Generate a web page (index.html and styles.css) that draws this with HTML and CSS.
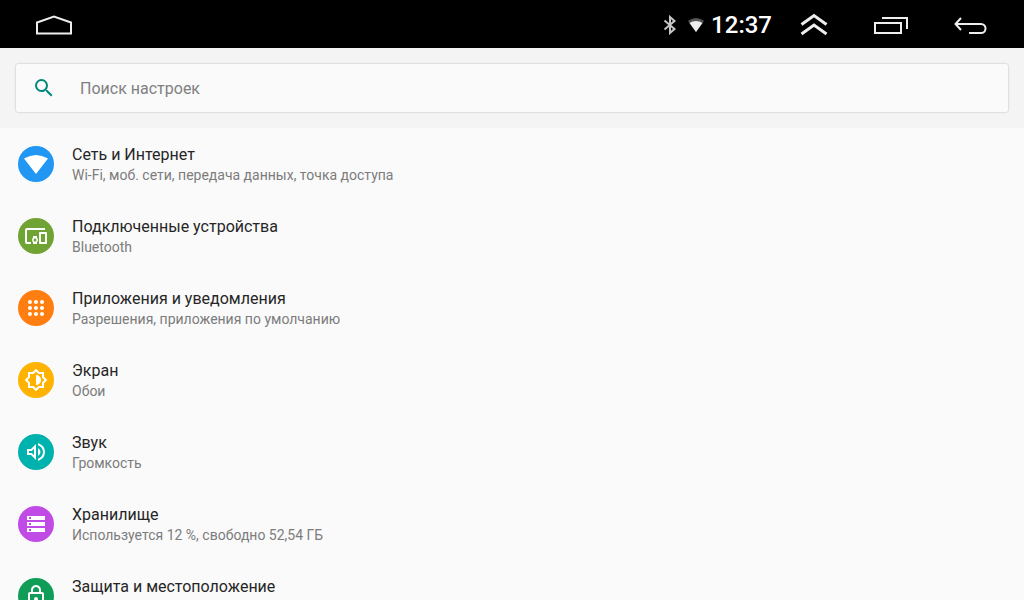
FILE: index.html
```
<!DOCTYPE html>
<html lang="ru">
<head>
  <meta charset="UTF-8">
  <meta name="viewport" content="width=device-width, initial-scale=1.0">
  <title>Настройки</title>
  <link rel="stylesheet" href="styles.css">
</head>
<body>

  <header class="status-bar">
    <button class="nav-button home" aria-label="Домой">
      <svg width="36" height="20" viewBox="0 0 36 20"><path d="M1 18.500V7.500L18 1.500L35 7.500V18.500Z"/></svg>
    </button>

    <div class="status">
      <svg class="bluetooth" width="14" height="20" viewBox="0 0 14 20"><path d="M1.500 5.500L11.500 14L7 18V2L11.500 6L1.500 14.500"/></svg>
      <svg class="signal" width="18" height="16" viewBox="0 0 18 16">
        <path class="signal-empty" d="M9 15L1 4Q9-2 17 4Z"/>
        <path class="signal-full" d="M9 15L2.500 6Q9 2 15.500 6Z"/>
      </svg>
      <span class="clock">12:37</span>
    </div>

    <button class="nav-button chevrons" aria-label="Развернуть">
      <svg width="28" height="24" viewBox="0 0 28 24"><path d="M1.500 11.500L14 2.500L26.500 11.500M1.500 21L14 12L26.500 21"/></svg>
    </button>
    <button class="nav-button" aria-label="Недавние приложения">
      <svg width="36" height="20" viewBox="0 0 36 20"><path d="M2 8H28V18H2ZM9 3H34V14"/></svg>
    </button>
    <button class="nav-button" aria-label="Назад">
      <svg width="34" height="20" viewBox="0 0 34 20"><path d="M7 3L1.500 9L7 15M2 9H27A4.500 4.500 0 0 1 27 18H15"/></svg>
    </button>
  </header>

  <div class="search-area">
    <label class="search-box">
      <svg width="24" height="24" viewBox="0 0 24 24"><path d="M15.500 14h-.79l-.28-.27A6.471 6.471 0 0 0 16 9.500 6.500 6.500 0 1 0 9.500 16c1.610 0 3.090-.59 4.230-1.570l.27.28v.79l5 4.990L20.490 19l-4.990-5zm-6 0C7.010 14 5 11.990 5 9.500S7.010 5 9.500 5 14 7.010 14 9.500 11.990 14 9.500 14z"/></svg>
      <input type="text" placeholder="Поиск настроек" aria-label="Поиск настроек">
    </label>
  </div>

  <main class="settings">
    <a class="item" href="#network">
      <span class="icon blue">
        <svg viewBox="0 0 24 24"><path d="M12 22L0 6.500Q12-.5 24 6.500Z"/></svg>
      </span>
      <span class="text">
        <span class="title">Сеть и Интернет</span>
        <span class="summary">Wi-Fi, моб. сети, передача данных, точка доступа</span>
      </span>
    </a>

    <a class="item" href="#devices">
      <span class="icon green">
        <svg viewBox="0 0 24 24"><path d="M3 6h18V4H3c-1.100 0-2 .9-2 2v12c0 1.100.9 2 2 2h4v-2H3V6zm10 6H9v1.780c-.61.55-1 1.330-1 2.220s.39 1.670 1 2.220V20h4v-1.780c.61-.55 1-1.340 1-2.220s-.39-1.670-1-2.220V12zm-2 5.500c-.83 0-1.500-.67-1.500-1.500s.67-1.500 1.500-1.500 1.500.67 1.500 1.500-.67 1.500-1.500 1.500zM22 8h-6c-.5 0-1 .5-1 1v10c0 .5.5 1 1 1h6c.5 0 1-.5 1-1V9c0-.5-.5-1-1-1zm-1 10h-4v-8h4v8z"/></svg>
      </span>
      <span class="text">
        <span class="title">Подключенные устройства</span>
        <span class="summary">Bluetooth</span>
      </span>
    </a>

    <a class="item" href="#apps">
      <span class="icon orange">
        <svg viewBox="0 0 24 24">
          <circle cx="6" cy="6" r="2"/><circle cx="12" cy="6" r="2"/><circle cx="18" cy="6" r="2"/>
          <circle cx="6" cy="12" r="2"/><circle cx="12" cy="12" r="2"/><circle cx="18" cy="12" r="2"/>
          <circle cx="6" cy="18" r="2"/><circle cx="12" cy="18" r="2"/><circle cx="18" cy="18" r="2"/>
        </svg>
      </span>
      <span class="text">
        <span class="title">Приложения и уведомления</span>
        <span class="summary">Разрешения, приложения по умолчанию</span>
      </span>
    </a>

    <a class="item" href="#display">
      <span class="icon amber">
        <svg viewBox="0 0 24 24"><path d="M20 15.310L23.310 12 20 8.690V4h-4.690L12 .69 8.690 4H4v4.690L.69 12 4 15.310V20h4.690L12 23.310 15.310 20H20v-4.690zm-2-.82V18h-3.510L12 20.490 9.510 18H6v-3.510L3.510 12 6 9.510V6h3.510L12 3.510 14.490 6H18v3.510L20.490 12 18 14.490zM12 7v10c2.760 0 5-2.240 5-5s-2.240-5-5-5z"/></svg>
      </span>
      <span class="text">
        <span class="title">Экран</span>
        <span class="summary">Обои</span>
      </span>
    </a>

    <a class="item" href="#sound">
      <span class="icon teal">
        <svg viewBox="0 0 24 24"><path d="M3 9v6h4l5 5V4L7 9H3zm7-.17v6.340L7.830 13H5v-2h2.830L10 8.830zM16.500 12A4.500 4.500 0 0 0 14 7.970v8.050A4.470 4.470 0 0 0 16.500 12zM14 3.230v2.060c2.890.86 5 3.540 5 6.710s-2.110 5.850-5 6.710v2.060c4.010-.91 7-4.490 7-8.770s-2.990-7.860-7-8.770z"/></svg>
      </span>
      <span class="text">
        <span class="title">Звук</span>
        <span class="summary">Громкость</span>
      </span>
    </a>

    <a class="item" href="#storage">
      <span class="icon purple">
        <svg viewBox="0 0 24 24"><path fill-rule="evenodd" d="M3 4h18v4H3zM5 5v2h2V5zM3 10h18v4H3zM5 11v2h2v-2zM3 16h18v4H3zM5 17v2h2v-2z"/></svg>
      </span>
      <span class="text">
        <span class="title">Хранилище</span>
        <span class="summary">Используется 12 %, свободно 52,54 ГБ</span>
      </span>
    </a>

    <a class="item" href="#security">
      <span class="icon dark-green">
        <svg viewBox="0 0 24 24"><path d="M12 17c1.100 0 2-.9 2-2s-.9-2-2-2-2 .9-2 2 .9 2 2 2zm6-9h-1V6c0-2.760-2.240-5-5-5S7 3.240 7 6v2H6c-1.100 0-2 .9-2 2v10c0 1.100.9 2 2 2h12c1.100 0 2-.9 2-2V10c0-1.100-.9-2-2-2zM9 6c0-1.660 1.340-3 3-3s3 1.340 3 3v2H9V6zm9 14H6V10h12v10z"/></svg>
      </span>
      <span class="text">
        <span class="title">Защита и местоположение</span>
      </span>
    </a>
  </main>

</body>
</html>
```
FILE: styles.css
```
* {
  box-sizing: border-box;
}
body {
  margin: 0;
  height: 100vh;
  display: flex;
  flex-direction: column;
  font-family: Roboto, "Noto Sans", sans-serif;
  background-color: #fafafa;
  color: #262626;
}

/* top bar */
.status-bar {
  flex: none;
  display: flex;
  align-items: center;
  gap: 45px;
  height: 48px;
  padding: 1px 36px 0;
  background-color: #000;
}
.nav-button {
  display: flex;
  padding: 0;
  border: none;
  background: none;
  cursor: pointer;
}
.nav-button svg {
  fill: none;
  stroke: #eee;
  stroke-width: 2;
}
.chevrons svg {
  stroke-width: 3;
}
.home {
  margin-right: auto;
}
.status {
  display: flex;
  align-items: center;
  margin-right: -17px;
}
.bluetooth {
  margin-right: 10px;
  fill: none;
  stroke: #c4c4c4;
  stroke-width: 2;
}
.signal {
  margin-right: 6px;
}
.signal-empty {
  fill: #555;
}
.signal-full {
  fill: #eee;
}
.clock {
  font-size: 24px;
  line-height: 28px;
  font-weight: 500;
  color: #fff;
}

/* search */
.search-area {
  flex: none;
  padding: 16px;
  background-color: #f4f4f4;
}
.search-box {
  display: flex;
  align-items: center;
  gap: 24px;
  height: 48px;
  padding: 0 16px;
  border-radius: 2px;
  background-color: #fafafa;
  box-shadow: 0 0 2px rgba(0, 0, 0, 0.3);
}
.search-box svg {
  fill: #00897b;
}
.search-box input {
  flex: 1;
  min-width: 0;
  padding: 0;
  border: none;
  outline: none;
  background: none;
  font-family: inherit;
  font-size: 16px;
  color: #262626;
}
.search-box input::placeholder {
  color: #808080;
}

/* list */
.settings {
  flex: 1;
  min-height: 0;
  overflow-y: auto;
  scrollbar-width: none;
}
.item {
  display: flex;
  gap: 18px;
  height: 72px;
  padding: 16px 18px;
  color: inherit;
  text-decoration: none;
}
.icon {
  flex: none;
  display: flex;
  align-items: center;
  justify-content: center;
  width: 36px;
  height: 36px;
  margin-top: 2px;
  border-radius: 50%;
}
.icon svg {
  width: 24px;
  height: 24px;
  fill: #fff;
}
.text {
  display: flex;
  flex-direction: column;
}
.title {
  font-size: 16px;
  line-height: 21px;
}
.summary {
  font-size: 14px;
  line-height: 20px;
  color: #7c7c7c;
}
.blue {
  background-color: #2196f3;
}
.green {
  background-color: #6fa334;
}
.orange {
  background-color: #ff7e0f;
}
.amber {
  background-color: #ffb300;
}
.teal {
  background-color: #00b2ae;
}
.purple {
  background-color: #c04be6;
}
.dark-green {
  background-color: #0f9d58;
}
```
